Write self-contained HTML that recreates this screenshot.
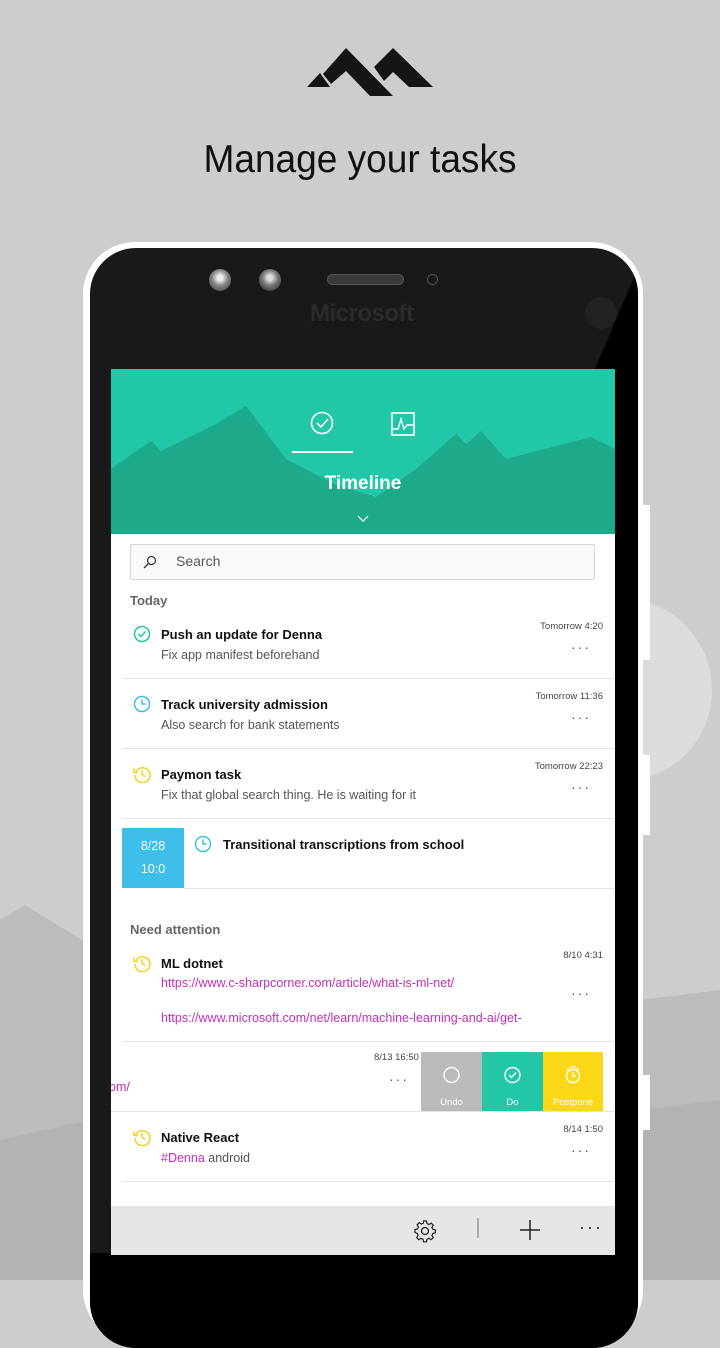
<!DOCTYPE html>
<html><head><meta charset="utf-8"><style>
*{margin:0;padding:0;box-sizing:border-box}
body{width:720px;height:1280px;overflow:hidden;background:#cdcdcd;font-family:"Liberation Sans",sans-serif;position:relative}
.abs{position:absolute}
.t{font-size:13px;font-weight:bold;color:#111}
.s{font-size:12.5px;color:#555}
.d{font-size:9.5px;color:#444}
.dots{font-size:14px;color:#555;letter-spacing:2px}
.sep{height:1px;background:#e3e3e3}
.lnk{color:#c030b8;font-size:12.5px}
</style></head><body>
<svg class="abs" style="left:0;top:0" width="720" height="1280">
<circle cx="620" cy="690" r="92" fill="#dcdcdc"/>
<polygon points="0,920 25,905 90,945 90,1280 0,1280" fill="#bcbcbc"/>
<polygon points="640,1000 720,990 720,1280 640,1280" fill="#bcbcbc"/>
<polygon points="0,1140 90,1120 90,1280 0,1280" fill="#b3b3b3"/>
<polygon points="640,1110 720,1100 720,1280 640,1280" fill="#b3b3b3"/>
<polygon points="307,87 320,73 330,87" fill="#151515"/>
<polygon points="323,74 346,48 393,96 370,96 346,71 331,84" fill="#151515"/>
<polygon points="374,67 393,48 433,87 409,87 393,72 384,81" fill="#151515"/>
</svg>
<div class="abs" style="left:0;width:720px;top:138px;text-align:center;font-size:39px;color:#111;transform:scaleX(0.95)">Manage your tasks</div>
<!-- phone -->
<div class="abs" style="left:83px;top:242px;width:560px;height:1100px;background:#fff;border-radius:52px"></div>
<div class="abs" style="left:643px;top:505px;width:7px;height:155px;background:#fff"></div>
<div class="abs" style="left:643px;top:755px;width:7px;height:80px;background:#fff"></div>
<div class="abs" style="left:643px;top:1075px;width:7px;height:55px;background:#fff"></div>
<div class="abs" style="left:90px;top:248px;width:548px;height:1100px;background:#191919;border-radius:46px;overflow:hidden">
<svg class="abs" style="left:0;top:0" width="548" height="1100"><polygon points="560,20 548,20 505,121 505,1100 560,1100" fill="#000"/><rect x="0" y="1005" width="548" height="100" fill="#000"/></svg>
</div>
<div class="abs" style="left:209px;top:269px;width:22px;height:22px;border-radius:50%;background:radial-gradient(circle at 50% 40%,#eee 15%,#888 45%,#555 80%)"></div>
<div class="abs" style="left:259px;top:269px;width:22px;height:22px;border-radius:50%;background:radial-gradient(circle at 50% 40%,#ddd 15%,#777 45%,#444 80%)"></div>
<div class="abs" style="left:327px;top:274px;width:77px;height:11px;border-radius:6px;background:#3a3a3a;border:1px solid #555"></div>
<div class="abs" style="left:427px;top:274px;width:11px;height:11px;border-radius:50%;border:1.5px solid #555"></div>
<div class="abs" style="left:585px;top:297px;width:32px;height:32px;border-radius:50%;background:#222"></div>
<div class="abs" style="left:310px;top:300px;font-size:24px;font-weight:bold;color:#2b2b2b;letter-spacing:-0.5px">Microsoft</div>
<!-- screen -->
<div class="abs" style="left:111px;top:369px;width:504px;height:886px;background:#fff;overflow:hidden">
<svg class="abs" style="left:0;top:0" width="504" height="165">
<rect width="504" height="165" fill="#21c7a6"/>
<polygon points="0,100 40,72 50,82 105,55 135,37 175,90 225,116 265,128 305,100 345,65 355,75 370,62 395,90 480,68 504,80 504,165 0,165" fill="#1caa8b"/>
<circle cx="211" cy="54" r="10.5" fill="none" stroke="#fff" stroke-width="1.6"/>
<path d="M206 54l4 4 7-8" fill="none" stroke="#fff" stroke-width="1.6"/>
<rect x="281" y="44" width="22" height="22" fill="none" stroke="#fff" stroke-width="1.6"/>
<path d="M282 60h5l3-10 3 10 3-4h6" fill="none" stroke="#fff" stroke-width="1.4"/>
<rect x="181" y="82" width="61" height="2" fill="#fff"/>
<text x="252" y="120" text-anchor="middle" font-family="Liberation Sans" font-weight="bold" font-size="19" fill="#fff">Timeline</text>
<path d="M247 147l5 5 5-5" fill="none" stroke="#fff" stroke-width="1.2"/>
</svg>
<div class="abs" style="left:19px;top:175px;width:465px;height:36px;border:1px solid #d6d6d6;border-radius:2px;background:#fafafa"></div>
<svg class="abs" style="left:32px;top:186px" width="14" height="14"><circle cx="8.5" cy="5.5" r="4" fill="none" stroke="#333" stroke-width="1.2"/><path d="M5.5 8.5L1 13" stroke="#333" stroke-width="1.3"/></svg>
<div class="abs" style="left:65px;top:184px;font-size:14px;color:#555">Search</div>
<div class="abs" style="left:19px;top:224px;font-size:13px;font-weight:bold;color:#666">Today</div>
<svg class="abs" style="left:22px;top:256px" width="18" height="18"><circle cx="9" cy="9" r="7.5" fill="none" stroke="#21c7a6" stroke-width="1.5"/><path d="M5.5 9l2.5 2.5 4.5-5" fill="none" stroke="#21c7a6" stroke-width="1.5"/></svg>
<div class="abs t" style="left:50px;top:258px">Push an update for Denna</div>
<div class="abs s" style="left:50px;top:279px">Fix app manifest beforehand</div>
<div class="abs d" style="right:12px;top:252px">Tomorrow 4:20</div>
<div class="abs sep" style="left:11px;top:309px;width:494px"></div>
<svg class="abs" style="left:22px;top:326px" width="18" height="18"><circle cx="9" cy="9" r="7.5" fill="none" stroke="#3ebfe9" stroke-width="1.5"/><path d="M9 4.5V9h3.5" fill="none" stroke="#3ebfe9" stroke-width="1.5"/></svg>
<div class="abs t" style="left:50px;top:328px">Track university admission</div>
<div class="abs s" style="left:50px;top:349px">Also search for bank statements</div>
<div class="abs d" style="right:12px;top:322px">Tomorrow 11:36</div>
<div class="abs sep" style="left:11px;top:379px;width:494px"></div>
<svg class="abs" style="left:22px;top:396px" width="18" height="18"><path d="M3 6.5A7.5 7.5 0 1 1 2 10" fill="none" stroke="#f4d21c" stroke-width="1.5"/><path d="M1 3.5v4h4" fill="none" stroke="#f4d21c" stroke-width="1.5"/><path d="M9 5v4l3 2.5" fill="none" stroke="#f4d21c" stroke-width="1.5"/></svg>
<div class="abs t" style="left:50px;top:398px">Paymon task</div>
<div class="abs s" style="left:50px;top:419px">Fix that global search thing. He is waiting for it</div>
<div class="abs d" style="right:12px;top:392px">Tomorrow 22:23</div>
<div class="abs sep" style="left:11px;top:449px;width:494px"></div>
<div class="abs" style="left:11px;top:459px;width:62px;height:60px;background:#3ebfe9;color:#fff;font-size:12.5px;text-align:center;line-height:23px;padding-top:7px">8/28<br>10:0</div>
<svg class="abs" style="left:83px;top:466px" width="18" height="18"><circle cx="9" cy="9" r="7.5" fill="none" stroke="#3ebfe9" stroke-width="1.5"/><path d="M9 4.5V9h3.5" fill="none" stroke="#3ebfe9" stroke-width="1.5"/></svg>
<div class="abs t" style="left:112px;top:468px">Transitional transcriptions from school</div>
<div class="abs sep" style="left:73px;top:519px;width:431px"></div>
<div class="abs" style="left:19px;top:553px;font-size:13px;font-weight:bold;color:#666">Need attention</div>
<svg class="abs" style="left:22px;top:585px" width="18" height="18"><path d="M3 6.5A7.5 7.5 0 1 1 2 10" fill="none" stroke="#f4d21c" stroke-width="1.5"/><path d="M1 3.5v4h4" fill="none" stroke="#f4d21c" stroke-width="1.5"/><path d="M9 5v4l3 2.5" fill="none" stroke="#f4d21c" stroke-width="1.5"/></svg>
<div class="abs t" style="left:50px;top:587px">ML dotnet</div>
<div class="abs lnk" style="left:50px;top:607px">https://www.c-sharpcorner.com/article/what-is-ml-net/</div>
<div class="abs lnk" style="left:50px;top:642px;white-space:nowrap">https://www.microsoft.com/net/learn/machine-learning-and-ai/get-</div>
<div class="abs d" style="right:12px;top:581px">8/10 4:31</div>
<div class="abs sep" style="left:11px;top:672px;width:494px"></div>
<div class="abs lnk" style="left:-2px;top:711px">om/</div>
<div class="abs d" style="left:263px;top:683px">8/13 16:50</div>
<div class="abs" style="left:310px;top:683px;width:61px;height:60px;background:#bababa"></div>
<div class="abs" style="left:371px;top:683px;width:61px;height:60px;background:#21c7a6"></div>
<div class="abs" style="left:432px;top:683px;width:60px;height:60px;background:#fad818"></div>
<svg class="abs" style="left:310px;top:683px" width="182" height="60">
<circle cx="30.5" cy="23" r="7.5" fill="none" stroke="#fff" stroke-width="1.4"/>
<circle cx="91.5" cy="23" r="7.5" fill="none" stroke="#fff" stroke-width="1.4"/><path d="M88 23l2.5 2.5 4.5-5" fill="none" stroke="#fff" stroke-width="1.4"/>
<circle cx="152" cy="24" r="6.5" fill="none" stroke="#fff" stroke-width="1.4"/><path d="M152 20v4h3M149 15h6M146 18l2-2M158 18l-2-2" fill="none" stroke="#fff" stroke-width="1.3"/>
<text x="30.5" y="53" text-anchor="middle" font-size="9.5" fill="#fff" font-family="Liberation Sans">Undo</text>
<text x="91.5" y="53" text-anchor="middle" font-size="9.5" fill="#fff" font-family="Liberation Sans">Do</text>
<text x="152" y="53" text-anchor="middle" font-size="9.5" fill="#fff" font-family="Liberation Sans">Postpone</text>
</svg>
<div class="abs sep" style="left:0;top:742px;width:504px"></div>
<svg class="abs" style="left:22px;top:759px" width="18" height="18"><path d="M3 6.5A7.5 7.5 0 1 1 2 10" fill="none" stroke="#f4d21c" stroke-width="1.5"/><path d="M1 3.5v4h4" fill="none" stroke="#f4d21c" stroke-width="1.5"/><path d="M9 5v4l3 2.5" fill="none" stroke="#f4d21c" stroke-width="1.5"/></svg>
<div class="abs t" style="left:50px;top:761px">Native React</div>
<div class="abs s" style="left:50px;top:782px"><span style="color:#c030b8">#Denna</span> android</div>
<div class="abs d" style="right:12px;top:755px">8/14 1:50</div>
<div class="abs sep" style="left:11px;top:812px;width:494px"></div>
<div class="abs" style="left:0;top:837px;width:504px;height:49px;background:#e6e6e6"></div>
<svg class="abs" style="left:302px;top:850px" width="24" height="24"><circle cx="12" cy="12" r="3.5" fill="none" stroke="#222" stroke-width="1.3"/><path d="M10.5 2h3l.5 2.5 2 1 2.2-1.4 2.1 2.1-1.4 2.2 1 2 2.5.5v3l-2.5.5-1 2 1.4 2.2-2.1 2.1-2.2-1.4-2 1-.5 2.5h-3l-.5-2.5-2-1-2.2 1.4-2.1-2.1 1.4-2.2-1-2L2 13.5v-3l2.5-.5 1-2-1.4-2.2 2.1-2.1 2.2 1.4 2-1z" fill="none" stroke="#222" stroke-width="1.2"/></svg>
<div class="abs" style="left:366px;top:849px;width:2px;height:20px;background:#aaa"></div>
<svg class="abs" style="left:408px;top:850px" width="22" height="22"><path d="M11 1v20M1 11h20" stroke="#222" stroke-width="1.5"/></svg>
<div class="abs" style="left:468px;top:848px;font-size:18px;color:#222;letter-spacing:2px">···</div>
</div>
<div class="abs dots" style="left:571px;top:639px">···</div>
<div class="abs dots" style="left:571px;top:709px">···</div>
<div class="abs dots" style="left:571px;top:779px">···</div>
<div class="abs dots" style="left:571px;top:985px">···</div>
<div class="abs dots" style="left:389px;top:1071px">···</div>
<div class="abs dots" style="left:571px;top:1142px">···</div>
</body></html>
